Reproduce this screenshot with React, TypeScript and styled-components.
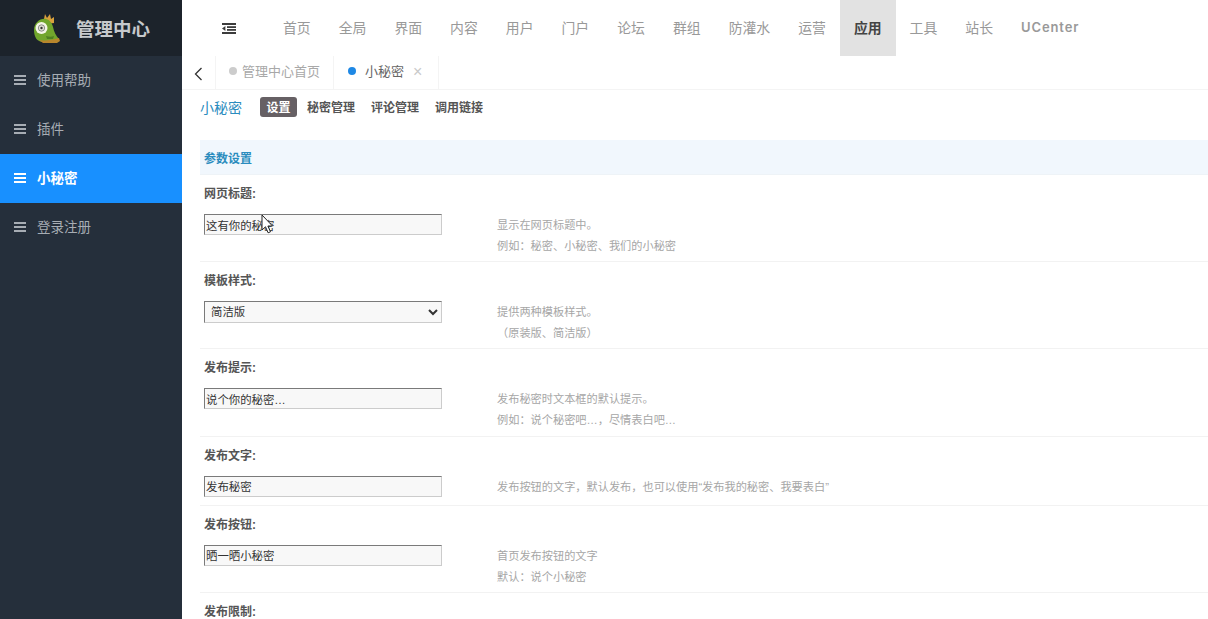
import React from "react";
import styled, { createGlobalStyle } from "styled-components";

const GlobalStyle = createGlobalStyle`
  html, body {
    margin: 0;
    height: 100%;
    overflow: hidden;
    background: #fff;
  }
  #root {
    height: 100%;
  }
  * {
    box-sizing: border-box;
  }
`;

const FONT = `"Liberation Sans", "Noto Sans CJK SC", sans-serif`;

const sideItems = ["使用帮助", "插件", "小秘密", "登录注册"];
const topItems = ["首页", "全局", "界面", "内容", "用户", "门户", "论坛", "群组", "防灌水", "运营", "应用", "工具", "站长", "UCenter"];
const subItems = ["设置", "秘密管理", "评论管理", "调用链接"];

const rows = [
  { label: "网页标题:", value: "这有你的秘密", help: ["显示在网页标题中。", "例如：秘密、小秘密、我们的小秘密"] },
  { label: "模板样式:", select: "简洁版", help: ["提供两种模板样式。", "（原装版、简洁版）"] },
  { label: "发布提示:", value: "说个你的秘密…", help: ["发布秘密时文本框的默认提示。", "例如：说个秘密吧…，尽情表白吧…"] },
  { label: "发布文字:", value: "发布秘密", help: ["发布按钮的文字，默认发布，也可以使用“发布我的秘密、我要表白”"] },
  { label: "发布按钮:", value: "晒一晒小秘密", help: ["首页发布按钮的文字", "默认：说个小秘密"] },
];

const Logo = () => (
  <svg width="27" height="31" viewBox="0 0 27 31">
    <path d="M11 6l1-5 2 4 3-4 1 5 3-2 0 6-8 1z" fill="#d8a03c" />
    <path d="M1 17C1 10 7 5 13 6c4 1 6 4 7 8 1 5 3 9 6 12 0 2-1 3-3 3H10C4 29 1 24 1 17z" fill="#71a62c" />
    <path d="M6 27c6 1 13 0 20-2l1 3-3 2H10z" fill="#b8862c" />
    <path d="M13 23c3 1 6 1 8 0l-1 3h-6z" fill="#4f7f22" />
    <circle cx="8.5" cy="15" r="6" fill="#f4f5e6" />
    <circle cx="8.5" cy="15" r="3.2" fill="#dfe0d2" stroke="#777" strokeWidth="0.8" />
    <circle cx="8.5" cy="15" r="1.2" fill="#333" />
  </svg>
);

const BarsIcon = () => (
  <svg width="12" height="10" viewBox="0 0 12 10" fill="currentColor">
    <rect y="0" width="12" height="2" />
    <rect y="4" width="12" height="2" />
    <rect y="8" width="12" height="2" />
  </svg>
);

const ToggleIcon = () => (
  <svg width="14" height="11" viewBox="0 0 14 11" fill="#3c3c3c">
    <rect x="0" y="0" width="14" height="2" />
    <rect x="5" y="3.2" width="9" height="1.8" />
    <rect x="5" y="6" width="9" height="1.8" />
    <rect x="0" y="9" width="14" height="2" />
    <path d="M0 5.5l3.4-2.4v4.8z" />
  </svg>
);

const Cursor = styled.svg`
  position: absolute;
  left: 261px;
  top: 214px;
  pointer-events: none;
`;

export default function App() {
  return (
    <>
      <GlobalStyle />
      <Page>
        <Sidebar>
          <Brand>
            <Logo />
            <BrandName>管理中心</BrandName>
          </Brand>
          {sideItems.map((item) => (
            <SideItem key={item} $active={item === "小秘密"}>
              <BarsIcon />
              <SideText>{item}</SideText>
            </SideItem>
          ))}
        </Sidebar>
        <Main>
          <TopBar>
            <Toggle>
              <ToggleIcon />
            </Toggle>
            {topItems.map((item) => (
              <TopItem key={item} $active={item === "应用"} $latin={item === "UCenter"}>
                {item}
              </TopItem>
            ))}
          </TopBar>
          <TabStrip>
            <BackButton>
              <svg width="9" height="14" viewBox="0 0 9 14" fill="none" stroke="#333" strokeWidth="1.3">
                <path d="M7.5 1L1.5 7l6 6" />
              </svg>
            </BackButton>
            <Tab>
              <Dot $color="#ccc" />
              <TabLabel $muted>管理中心首页</TabLabel>
            </Tab>
            <Tab $current>
              <Dot $color="#1e88e5" />
              <TabLabel>小秘密</TabLabel>
              <TabClose>×</TabClose>
            </Tab>
          </TabStrip>
          <Content>
            <SubNav>
              <PageTitle>小秘密</PageTitle>
              {subItems.map((item) => (
                <SubLink key={item} $active={item === "设置"}>
                  {item}
                </SubLink>
              ))}
            </SubNav>
            <SectionHead>参数设置</SectionHead>
            {rows.map((row) => (
              <Row key={row.label}>
                <Label>{row.label}</Label>
                <Fields>
                  {row.select ? (
                    <Select defaultValue={row.select}>
                      <option>{row.select}</option>
                      <option>原装版</option>
                    </Select>
                  ) : (
                    <Input defaultValue={row.value} />
                  )}
                  <Help>
                    {row.help.map((line) => (
                      <div key={line}>{line}</div>
                    ))}
                  </Help>
                </Fields>
              </Row>
            ))}
            <Label>发布限制:</Label>
          </Content>
        </Main>
        <Cursor width="13" height="21" viewBox="0 0 13 21">
          <path d="M1 1v15l3.5-3.2 2.6 6 2.4-1-2.6-5.8H11.5z" fill="#fff" stroke="#222" strokeWidth="1" />
        </Cursor>
      </Page>
    </>
  );
}

const Page = styled.div`
  position: relative;
  display: flex;
  width: 1208px;
  height: 619px;
  overflow: hidden;
  font-family: ${FONT};
  background: #fff;
`;

const Sidebar = styled.aside`
  flex: 0 0 182px;
  background: #252f3b;
`;

const Brand = styled.div`
  display: flex;
  align-items: center;
  gap: 16px;
  height: 56px;
  padding-left: 33px;
  background: #1c232b;
`;

const BrandName = styled.div`
  padding-bottom: 1px;
  font-size: 18.5px;
  font-weight: 700;
  color: #c6c9cc;
`;

const SideItem = styled.div<{ $active?: boolean }>`
  display: flex;
  align-items: center;
  gap: 11px;
  height: 49px;
  padding: 0 0 2px 14px;
  font-size: 13.5px;
  font-weight: ${(p) => (p.$active ? 700 : 400)};
  color: ${(p) => (p.$active ? "#fff" : "#a7adb4")};
  background: ${(p) => (p.$active ? "#1890ff" : "transparent")};
`;

const SideText = styled.span`
  margin-bottom: 2px;
`;

const Main = styled.main`
  flex: 1;
  min-width: 0;
  display: flex;
  flex-direction: column;
`;

const TopBar = styled.div`
  display: flex;
  align-items: stretch;
  height: 56px;
  flex: none;
`;

const Toggle = styled.div`
  display: flex;
  align-items: center;
  justify-content: center;
  width: 87px;
  padding: 0 0 0 7px;
`;

const TopItem = styled.div<{ $active?: boolean; $latin?: boolean }>`
  display: flex;
  align-items: center;
  padding: 0 14px 3px;
  font-family: ${(p) => (p.$latin ? `Inter, ${FONT}` : FONT)};
  font-size: ${(p) => (p.$latin ? "13px" : "13.85px")};
  letter-spacing: ${(p) => (p.$latin ? "0.9px" : "0")};
  font-weight: ${(p) => (p.$active ? 700 : p.$latin ? 600 : 400)};
  color: ${(p) => (p.$active ? "#444" : "#999")};
  background: ${(p) => (p.$active ? "#e2e2e2" : "transparent")};
`;

const TabStrip = styled.div`
  display: flex;
  flex: none;
  height: 34px;
  border-bottom: 1px solid #f4f4f4;
`;

const BackButton = styled.div`
  display: flex;
  align-items: center;
  justify-content: center;
  width: 34px;
  padding-top: 2px;
  border-right: 1px solid #f4f4f4;
`;

const Tab = styled.div<{ $current?: boolean }>`
  display: flex;
  align-items: center;
  gap: ${(p) => (p.$current ? "9px" : "5px")};
  padding: 0 ${(p) => (p.$current ? "16px" : "13px")} 4px ${(p) => (p.$current ? "14px" : "13px")};
  border-right: 1px solid #f4f4f4;
`;

const Dot = styled.i<{ $color: string }>`
  width: 8px;
  height: 8px;
  border-radius: 50%;
  background: ${(p) => p.$color};
`;

const TabLabel = styled.span<{ $muted?: boolean }>`
  font-size: 13px;
  color: ${(p) => (p.$muted ? "#a8a8a8" : "#666")};
`;

const TabClose = styled.span`
  padding-top: 3px;
  font-size: 16px;
  color: #c9c9c9;
`;

const Content = styled.div`
  padding-left: 18px;
`;

const SubNav = styled.div`
  display: flex;
  align-items: center;
  height: 36px;
  padding-bottom: 2px;
  margin-bottom: 14px;
`;

const PageTitle = styled.h1`
  margin: 0 18px 0 0;
  font-size: 14px;
  font-weight: 400;
  color: #2b8cbe;
`;

const SubLink = styled.a<{ $active?: boolean }>`
  height: 20px;
  line-height: 22px;
  padding: 0 ${(p) => (p.$active ? "6.5px" : "6px")};
  margin-right: 4px;
  border-radius: 3px;
  font-size: 12px;
  font-weight: 700;
  color: ${(p) => (p.$active ? "#fff" : "#555")};
  background: ${(p) => (p.$active ? "#666064" : "transparent")};
`;

const SectionHead = styled.div`
  height: 35px;
  line-height: 38px;
  padding-left: 4px;
  font-size: 12px;
  font-weight: 700;
  color: #2b8cbe;
  background: #f1f7fd;
  border-bottom: 1px solid #eef3f7;
`;

const Row = styled.section`
  padding-bottom: 4.2px;
  border-bottom: 1px solid #f2f2f2;
`;

const Label = styled.div`
  height: 39px;
  line-height: 38px;
  padding-left: 4px;
  font-size: 12px;
  font-weight: 700;
  color: #555;
`;

const Fields = styled.div`
  display: flex;
  align-items: flex-start;
  min-height: 24.8px;
  padding-left: 4px;
`;

const fieldBorder = `
  width: 238px;
  height: 21px;
  margin: 0 55px 0 0;
  flex: none;
  border: 1px solid;
  border-color: #7a7a7a #ccc #ccc #7a7a7a;
  border-radius: 0;
  font-family: ${FONT};
  font-size: 11.4px;
  color: #333;
  background: #f8f8f8;
  outline: none;
`;

const Input = styled.input`
  ${fieldBorder}
  padding: 0 1px;
`;

const Select = styled.select`
  ${fieldBorder}
  height: 22px;
  padding: 0 2px;
`;

const Help = styled.div`
  padding-top: 1px;
  font-size: 11.2px;
  line-height: 21px;
  color: #a6a6a6;
`;
